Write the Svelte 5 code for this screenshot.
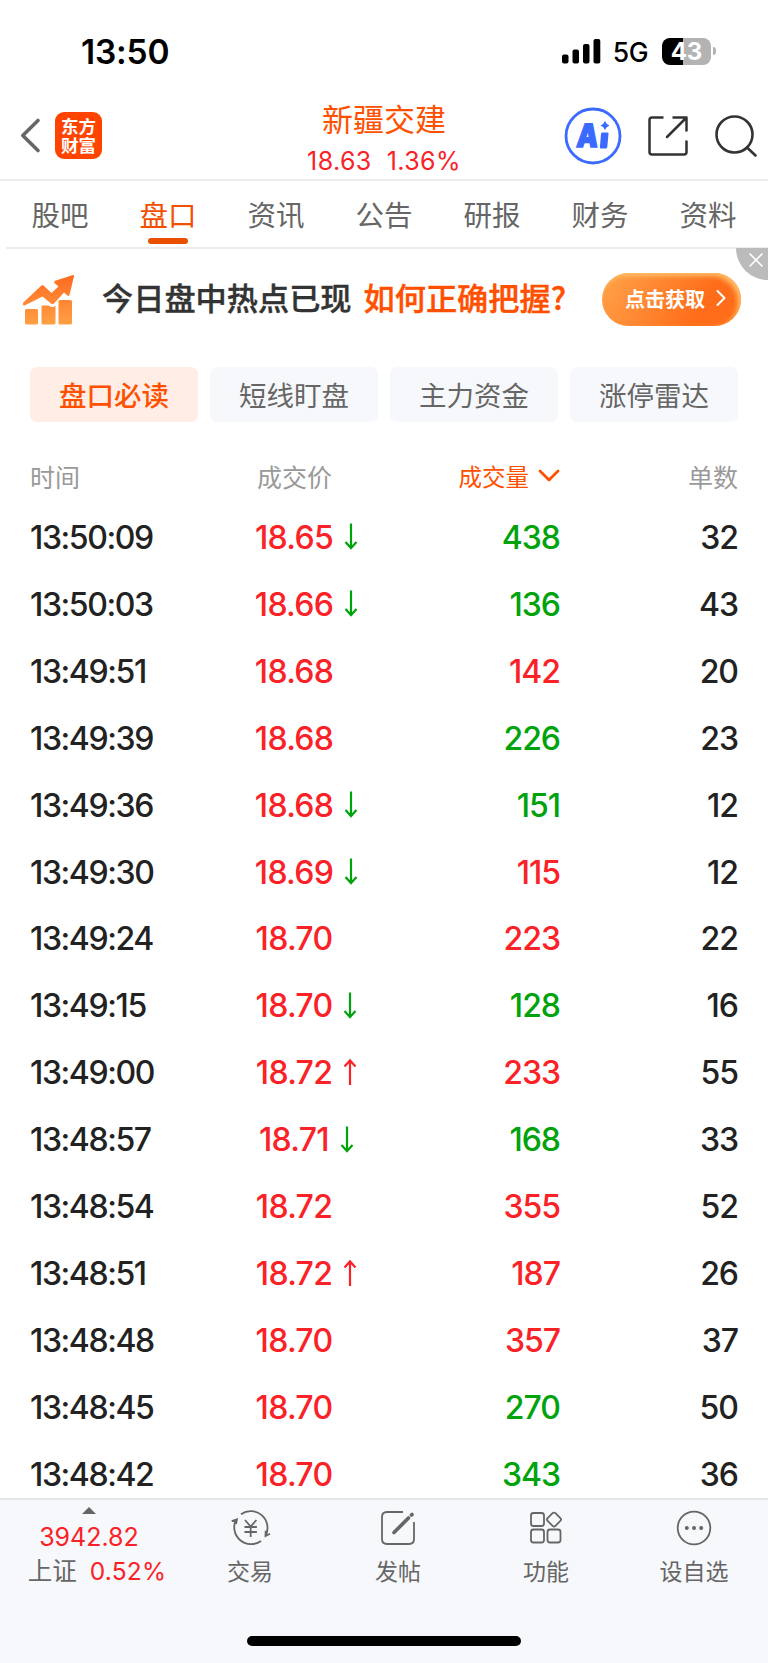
<script lang="ts">
  interface Trade {
    time: string;
    price: string;
    dir?: 'up' | 'down';
    volume: number;
    side: 'buy' | 'sell';
    orders: number;
  }

  const tabs = ['股吧', '盘口', '资讯', '公告', '研报', '财务', '资料'];
  const filters = ['盘口必读', '短线盯盘', '主力资金', '涨停雷达'];

  let activeTab = $state('盘口');
  let activeFilter = $state('盘口必读');
  let showBanner = $state(true);

  const trades: Trade[] = [
    { time: '13:50:09', price: '18.65', dir: 'down', volume: 438, side: 'sell', orders: 32 },
    { time: '13:50:03', price: '18.66', dir: 'down', volume: 136, side: 'sell', orders: 43 },
    { time: '13:49:51', price: '18.68', volume: 142, side: 'buy', orders: 20 },
    { time: '13:49:39', price: '18.68', volume: 226, side: 'sell', orders: 23 },
    { time: '13:49:36', price: '18.68', dir: 'down', volume: 151, side: 'sell', orders: 12 },
    { time: '13:49:30', price: '18.69', dir: 'down', volume: 115, side: 'buy', orders: 12 },
    { time: '13:49:24', price: '18.70', volume: 223, side: 'buy', orders: 22 },
    { time: '13:49:15', price: '18.70', dir: 'down', volume: 128, side: 'sell', orders: 16 },
    { time: '13:49:00', price: '18.72', dir: 'up', volume: 233, side: 'buy', orders: 55 },
    { time: '13:48:57', price: '18.71', dir: 'down', volume: 168, side: 'sell', orders: 33 },
    { time: '13:48:54', price: '18.72', volume: 355, side: 'buy', orders: 52 },
    { time: '13:48:51', price: '18.72', dir: 'up', volume: 187, side: 'buy', orders: 26 },
    { time: '13:48:48', price: '18.70', volume: 357, side: 'buy', orders: 37 },
    { time: '13:48:45', price: '18.70', volume: 270, side: 'sell', orders: 50 },
    { time: '13:48:42', price: '18.70', volume: 343, side: 'sell', orders: 36 }
  ];
</script>

<div class="screen">
  <div class="status-bar">
    <span class="clock">13:50</span>
    <div class="status-right">
      <svg class="signal" width="39" height="25" viewBox="0 0 39 25">
        <rect x="0" y="15.5" width="6.5" height="9" rx="2" />
        <rect x="10.5" y="10.5" width="6.5" height="14" rx="2" />
        <rect x="21" y="5" width="6.5" height="19.5" rx="2" />
        <rect x="31.5" y="0" width="6.8" height="24.5" rx="2" />
      </svg>
      <span class="network">5G</span>
      <span class="battery"><span>43</span></span>
      <span class="battery-tip"></span>
    </div>
  </div>

  <header class="header">
    <div class="header-left">
      <svg width="20" height="35" viewBox="0 0 20 35" fill="none" stroke="#666" stroke-width="3.6" stroke-linecap="round" stroke-linejoin="round">
        <path d="M18 2.5 2.8 17.5 18 32.5" />
      </svg>
      <div class="logo"><span>东方</span><span>财富</span></div>
    </div>
    <div class="stock">
      <h1>新疆交建</h1>
      <div class="quote"><span>18.63</span><span>1.36%</span></div>
    </div>
    <div class="header-right">
      <svg width="58" height="58" viewBox="0 0 58 58">
        <circle cx="29" cy="29" r="27" fill="none" stroke="#3a6aff" stroke-width="2.8" />
        <text class="ai" transform="translate(12 39.5) skewX(-5) scale(.84 1)">A</text>
        <path class="blue" d="M38.5 25.5h5q1.2 0 1 1.2l-1.2 13.3q-.2 1.5-1.7 1.5h-4.7q-1.2 0-1-1.2l1.1-13.5q.2-1.3 1.5-1.3zM41 14q1.2 3.300 4.500 4.500-3.300 1.200-4.500 4.500-1.200-3.300-4.500-4.500 3.300-1.200 4.500-4.500z" />
      </svg>
      <svg class="share" width="42" height="42" viewBox="0 0 42 42" fill="none" stroke="#333" stroke-width="2.5" stroke-linecap="round" stroke-linejoin="round">
        <path d="M15.5 2.5H5q-2.5 0-2.5 2.5v32q0 2.5 2.5 2.5h32q2.5 0 2.5-2.5V26.5M26.5 2.5h13v13M39 3 20 22" />
      </svg>
      <svg width="42" height="42" viewBox="0 0 42 42" fill="none" stroke="#333" stroke-width="2.6" stroke-linecap="round">
        <circle cx="19.5" cy="19.5" r="18" />
        <path d="m32 32.5 8.5 8" />
      </svg>
    </div>
  </header>

  <nav class="tabs">
    {#each tabs as tab (tab)}
      <button class="tab" class:active={tab === activeTab} onclick={() => (activeTab = tab)}>{tab}</button>
    {/each}
  </nav>

  {#if showBanner}
    <div class="banner">
      <svg width="52" height="50" viewBox="0 0 52 50">
        <defs>
          <linearGradient id="rise" x1="0" y1="0" x2="0" y2="1">
            <stop offset="0" stop-color="#ff6a1f" />
            <stop offset="1" stop-color="#ffa045" />
          </linearGradient>
        </defs>
        <path
          fill="url(#rise)"
          d="M.3 27.5 18.5 10.5q1-1 2 0l8 7.500 7-6.500-4-3.500q-1-1.500.7-2.200L50 0q1.300-.2 1 1.200L46.500 20q-1 1.500-2.200.5L41 17.500 31 28.500q-1.500 1.300-3 0L19.500 21.500 1.500 30.500Q-.7 31 .3 27.500zM3.500 34h10q1.500 0 1.500 1.500V48q0 1.500-1.500 1.500h-10Q2 49.500 2 48V35.500Q2 34 3.500 34zM20 30.500h5.500q4 3 7 .2V48q0 1.500-1.500 1.500H20q-1.500 0-1.500-1.500V32q0-1.500 1.500-1.500zM37 25h10.500q1.500 0 1.500 1.500V48q0 1.500-1.500 1.500H37q-1.500 0-1.500-1.500V26.500Q35.500 25 37 25z"
        />
      </svg>
      <p class="banner-text">今日盘中热点已现<em>如何正确把握?</em></p>
      <button class="banner-cta">
        点击获取
        <svg width="10" height="16" viewBox="0 0 10 16" fill="none" stroke="#fff" stroke-width="2" stroke-linecap="round" stroke-linejoin="round">
          <path d="m1.5 1 7 7-7 7" />
        </svg>
      </button>
      <button class="banner-close" aria-label="关闭" onclick={() => (showBanner = false)}>
        <svg width="14" height="14" viewBox="0 0 14 14" stroke="#fff" stroke-width="1.6" stroke-linecap="round">
          <path d="m1 1 12 12M13 1 1 13" />
        </svg>
      </button>
    </div>
  {/if}

  <div class="filters">
    {#each filters as filter (filter)}
      <button class="filter" class:active={filter === activeFilter} onclick={() => (activeFilter = filter)}>{filter}</button>
    {/each}
  </div>

  <section class="trades">
    <div class="row head">
      <span>时间</span>
      <span class="head-price">成交价</span>
      <span class="sorted">
        成交量
        <svg width="22" height="14" viewBox="0 0 22 14" fill="none" stroke="#ff5000" stroke-width="2.8" stroke-linecap="round" stroke-linejoin="round">
          <path d="m2 2 9 9 9-9" />
        </svg>
      </span>
      <span class="orders">单数</span>
    </div>
    {#each trades as t (t.time)}
      <div class="row">
        <span class="time">{t.time}</span>
        <span class="price">
          {t.price}
          <svg class={t.dir} width="14" height="28" viewBox="0 0 14 28" fill="none" stroke-width="2.2">
            {#if t.dir === 'down'}
              <path d="M7 .5v24M1.500 19 7 25l5.500-6" />
            {:else if t.dir === 'up'}
              <path d="M7 26V2M1.500 7.500 7 1.500l5.500 6" />
            {/if}
          </svg>
        </span>
        <span class="volume {t.side}">{t.volume}</span>
        <span class="orders">{t.orders}</span>
      </div>
    {/each}
  </section>

  <footer class="toolbar">
    <div class="index">
      <span class="caret"></span>
      <span class="index-value">3942.82</span>
      <span class="index-change">上证<b>0.52%</b></span>
    </div>
    <div class="tool">
      <svg width="40" height="36" viewBox="0 0 40 36">
        <path d="M11 4.200A16.800 16.800 0 0 1 35.700 25.500M31 30.900A16.800 16.800 0 0 1 6 9.900M1.700 11.200 7 9.300 6 14M35.700 20.700l-.2 5.300 4.500-2.300" />
        <path d="m15 10 5.700 6.500 5.700-6.500M20.700 16.500V27M14.500 17h12.400M14.500 22h12.400" />
      </svg>
      交易
    </div>
    <div class="tool">
      <svg width="36" height="36" viewBox="0 0 36 36">
        <path d="M23 2H7Q2 2 2 7v22q0 5 5 5h22q5 0 5-5V12" />
        <path class="pen" d="M14 22.5 28.5 8M31.5 5l.5-.5" />
      </svg>
      发帖
    </div>
    <div class="tool">
      <svg width="36" height="36" viewBox="0 0 36 36">
        <rect x="3" y="3" width="13" height="13" rx="2.5" />
        <rect x="3" y="19.5" width="13" height="13" rx="2.5" />
        <rect x="19.5" y="19.5" width="13" height="13" rx="2.5" />
        <rect x="20.5" y="4" width="11" height="11" rx="2" transform="rotate(45 26 9.5)" />
      </svg>
      功能
    </div>
    <div class="tool">
      <svg width="36" height="36" viewBox="0 0 36 36">
        <circle cx="18" cy="18" r="16.3" />
        <path class="dots" d="M10.8 18h.01M18 18h.01M25.2 18h.01" />
      </svg>
      设自选
    </div>
    <span class="home-indicator"></span>
  </footer>
</div>

<style>
  :global(body) {
    background: #fff;
  }

  .screen {
    display: flex;
    flex-direction: column;
    height: 1663px;
    overflow: hidden;
    background: #fff;
    color: #222;
    font-family: Inter, 'Noto Sans CJK SC', sans-serif;
  }

  button {
    border: none;
    padding: 0;
    background: none;
    color: inherit;
    font: inherit;
    cursor: pointer;
  }

  svg {
    display: block;
    flex-shrink: 0;
    overflow: visible;
  }

  /* Status bar */
  .status-bar {
    display: flex;
    align-items: center;
    justify-content: space-between;
    height: 60px;
    padding: 22px 52px 10px 81px;
    color: #000;
    flex-shrink: 0;
  }

  .clock {
    font-size: 33.5px;
    font-weight: 600;
    letter-spacing: -0.2px;
  }

  .status-right {
    display: flex;
    align-items: center;
    margin-top: -2px;
  }

  .network {
    margin: 2px 14px 0 12px;
    font-size: 26.5px;
    font-weight: 500;
    letter-spacing: -0.5px;
  }

  .battery {
    display: flex;
    align-items: center;
    justify-content: center;
    width: 49px;
    height: 27px;
    border-radius: 8px;
    background: linear-gradient(90deg, #000 43%, #b3b3b3 43%);
    color: #fff;
    font-size: 24px;
    font-weight: 700;
  }

  .battery-tip {
    width: 3px;
    height: 8px;
    margin-left: 2px;
    border-radius: 0 4px 4px 0;
    background: #b3b3b3;
  }

  /* Header */
  .header {
    display: grid;
    grid-template-columns: 1fr auto 1fr;
    align-items: center;
    height: 87px;
    padding: 0 11px;
    border-bottom: 2px solid #ececec;
    flex-shrink: 0;
  }

  .header-left,
  .header-right {
    display: flex;
    align-items: center;
  }

  .header-left {
    gap: 15px;
    margin-left: 9px;
  }

  .header-right {
    justify-content: flex-end;
    gap: 25px;
  }

  .share {
    margin-right: 1px;
  }

  .logo {
    display: flex;
    flex-direction: column;
    align-items: center;
    justify-content: center;
    width: 47px;
    height: 47px;
    border-radius: 9px;
    background: #ff4400;
    color: #fff;
    font-size: 17.5px;
    font-weight: 700;
    line-height: 19px;
  }

  .stock {
    margin-top: 7px;
    text-align: center;
  }

  h1 {
    margin: 0;
    color: #ff5000;
    font-size: 31px;
    font-weight: 400;
    line-height: 40px;
  }

  .quote {
    display: flex;
    justify-content: center;
    gap: 15px;
    margin-top: 3px;
    color: #fa2127;
    font-size: 25px;
    letter-spacing: 0.4px;
    line-height: 36px;
  }

  .ai {
    fill: #3a6aff;
    stroke: #3a6aff;
    stroke-width: 1.5px;
    font-size: 32px;
    font-weight: 900;
  }

  .blue {
    fill: #3a6aff;
  }

  /* Tabs */
  .tabs {
    display: grid;
    grid-template-columns: repeat(7, 108px);
    height: 66px;
    margin-left: 6px;
    border-bottom: 2px solid #ececec;
    flex-shrink: 0;
  }

  .tab {
    position: relative;
    padding-bottom: 2px;
    color: #666;
    font-size: 28.5px;
  }

  .tab.active {
    color: #f25000;
  }

  .tab.active::after {
    content: '';
    position: absolute;
    left: 50%;
    bottom: 3px;
    width: 40px;
    height: 6px;
    margin-left: -20px;
    border-radius: 3px;
    background: #eb5000;
  }

  /* Banner */
  .banner {
    position: relative;
    display: flex;
    align-items: center;
    height: 101px;
    padding: 0 27px 0 23px;
    flex-shrink: 0;
  }

  .banner-text {
    flex: 1;
    margin: -6px 0 0 27px;
    color: #333;
    font-family: 'Noto Sans CJK SC', sans-serif;
    font-size: 31.2px;
    font-weight: 500;
    white-space: nowrap;
    -webkit-text-stroke: 0.4px currentColor;
  }

  .banner-text em {
    margin-left: 12px;
    color: #ff5000;
    font-style: normal;
  }

  .banner-cta {
    display: flex;
    align-items: center;
    justify-content: center;
    gap: 11px;
    width: 139px;
    height: 53px;
    margin-top: -1px;
    padding: 0 0 2px 8px;
    box-sizing: border-box;
    border-radius: 27px;
    background: linear-gradient(120deg, #ffa047 5%, #ff6d1a 70%);
    box-shadow: inset -3px 3px 5px #ffc068;
    color: #fff;
    font-size: 20px;
    font-weight: 700;
  }

  .banner-close {
    position: absolute;
    top: -1px;
    right: 0;
    display: flex;
    align-items: center;
    justify-content: center;
    width: 32px;
    height: 32px;
    padding: 0 0 8px 8px;
    box-sizing: border-box;
    border-radius: 0 0 0 32px;
    background: #bbb;
  }

  /* Filters */
  .filters {
    display: grid;
    grid-template-columns: repeat(4, 1fr);
    gap: 12px;
    padding: 0 30px;
    margin-top: 17px;
    flex-shrink: 0;
  }

  .filter {
    height: 55px;
    padding-bottom: 1px;
    border-radius: 7px;
    background: #f7f8fb;
    color: #666;
    font-size: 27.5px;
  }

  .filter.active {
    background: #ffede6;
    color: #ff5000;
    font-weight: 500;
  }

  /* Trades */
  .trades {
    flex: 1;
    min-height: 0;
    overflow: hidden;
    padding: 0 30px;
  }

  .row {
    display: grid;
    grid-template-columns: 189px 175px 166px 1fr;
    align-items: center;
    height: 66.93px;
    font-size: 32px;
    font-weight: 500;
    letter-spacing: -1px;
    white-space: nowrap;
  }

  .row.head {
    height: 56px;
    padding-top: 26px;
    color: #999;
    font-size: 25px;
    font-weight: 400;
    letter-spacing: 0;
  }

  .time {
    letter-spacing: -1.4px;
  }

  .head-price {
    padding-left: 38px;
  }

  .price {
    display: flex;
    align-items: center;
    justify-content: center;
    gap: 11px;
    color: #fa2127;
    letter-spacing: -0.7px;
  }

  .up {
    stroke: #fa2127;
  }

  .down {
    stroke: #00a30b;
  }

  .volume,
  .orders {
    text-align: right;
  }

  .buy {
    color: #fa2127;
  }

  .sell {
    color: #00a30b;
  }

  .sorted {
    display: flex;
    align-items: center;
    justify-content: flex-end;
    gap: 9px;
    color: #ff5000;
    font-size: 23.5px;
  }

  /* Toolbar */
  .toolbar {
    position: relative;
    display: grid;
    grid-template-columns: 176px repeat(4, 148px);
    height: 163px;
    border-top: 2px solid #e3e4e6;
    background: #f7f8fb;
    color: #666;
    flex-shrink: 0;
  }

  .index {
    display: flex;
    flex-direction: column;
    align-items: center;
    padding: 7px 0 0 2px;
    color: #fa2127;
    font-size: 25px;
  }

  .caret {
    border: 7px solid transparent;
    border-top: none;
    border-bottom-color: #666;
  }

  .index-value {
    margin-top: 7px;
    line-height: 32px;
  }

  .index-change {
    display: flex;
    gap: 13px;
    margin: 1px 0 0 16px;
    color: #666;
    font-size: 24.5px;
    line-height: 35px;
  }

  .index-change b {
    color: #fa2127;
    font-weight: 400;
    letter-spacing: 0.2px;
  }

  .tool {
    display: flex;
    flex-direction: column;
    align-items: center;
    gap: 9px;
    padding-top: 10px;
    font-size: 23px;
    line-height: 34px;
  }

  .tool svg {
    fill: none;
    stroke: #666;
    stroke-width: 1.8;
  }

  .tool .pen {
    stroke-width: 3.6;
    stroke-linecap: round;
  }

  .tool .dots {
    stroke-width: 4;
    stroke-linecap: round;
  }

  .home-indicator {
    position: absolute;
    left: 247px;
    bottom: 17px;
    width: 274px;
    height: 10px;
    border-radius: 5px;
    background: #000;
  }
</style>
